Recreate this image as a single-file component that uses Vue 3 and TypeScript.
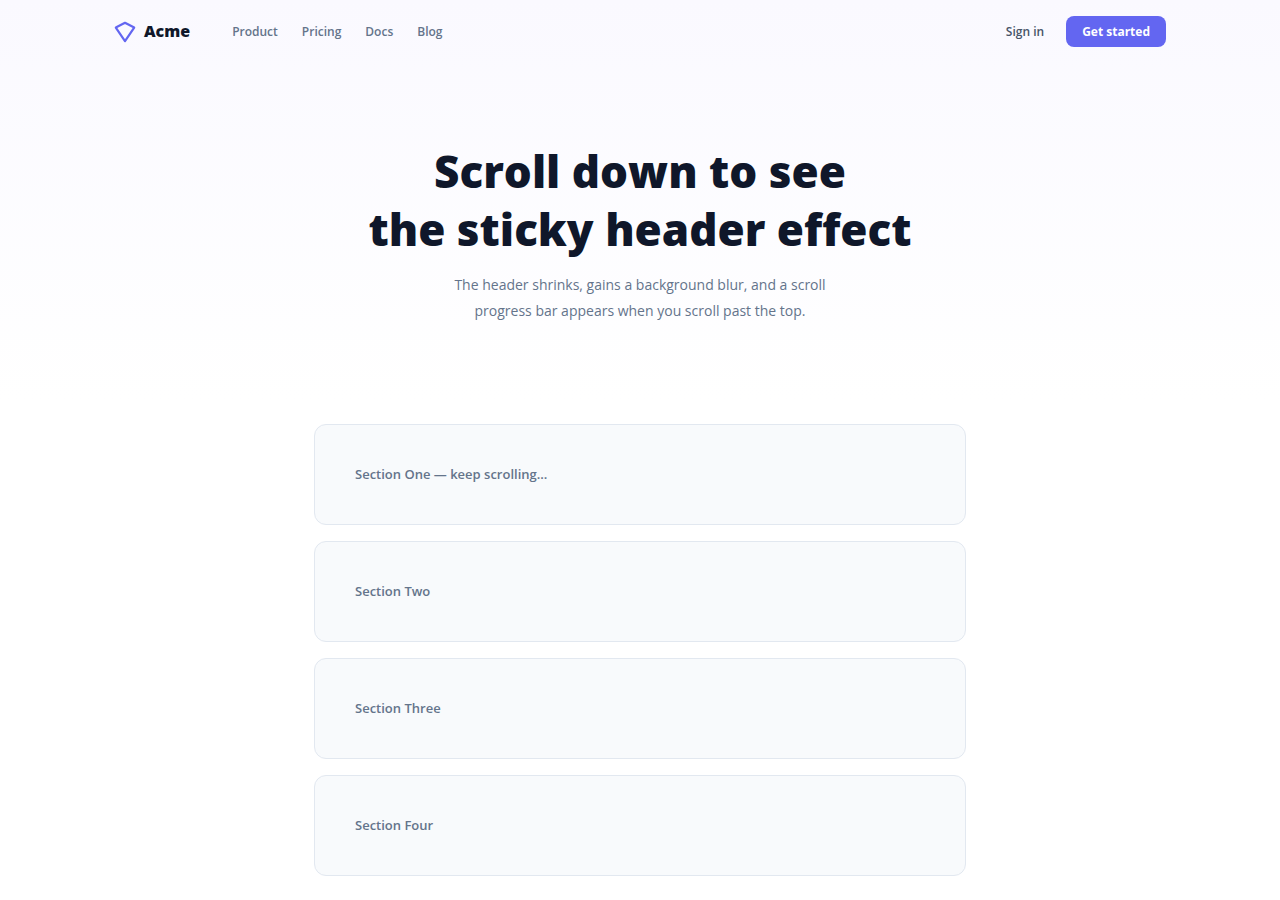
<script setup lang="ts">
import { computed, onMounted, onUnmounted, ref } from 'vue'

interface NavLink {
  label: string
  href: string
}

const links: NavLink[] = [
  { label: 'Product', href: '#product' },
  { label: 'Pricing', href: '#pricing' },
  { label: 'Docs', href: '#docs' },
  { label: 'Blog', href: '#blog' },
]

const sections: string[] = [
  'Section One — keep scrolling...',
  'Section Two',
  'Section Three',
  'Section Four',
]

const scrollTop = ref(0)
const progress = ref(0)
const scrolled = computed(() => scrollTop.value > 20)

function onScroll(): void {
  const root = document.documentElement
  const range = root.scrollHeight - root.clientHeight
  scrollTop.value = window.scrollY
  progress.value = range > 0 ? (window.scrollY / range) * 100 : 0
}

onMounted(() => window.addEventListener('scroll', onScroll, { passive: true }))
onUnmounted(() => window.removeEventListener('scroll', onScroll))
</script>

<template>
  <div class="page">
    <header class="header" :class="{ scrolled }">
      <div class="header-inner">
        <a class="brand" href="#top">
          <svg class="logo" viewBox="0 0 22 22" fill="none" aria-hidden="true">
            <path d="M11 1.8 L20.2 6.6 L11 20.2 L1.8 6.6 Z" stroke="#6366f1" stroke-width="2.2" stroke-linejoin="round" />
          </svg>
          <span>Acme</span>
        </a>
        <nav class="nav" aria-label="Main">
          <a v-for="link in links" :key="link.label" :href="link.href">{{ link.label }}</a>
        </nav>
        <div class="actions">
          <a class="signin" href="#signin">Sign in</a>
          <button class="cta" type="button">Get started</button>
        </div>
      </div>
      <div v-if="scrolled" class="progress" :style="{ width: progress + '%' }"></div>
    </header>

    <section id="top" class="hero">
      <h1>
        <span>Scroll down to see</span>
        <span>the sticky header effect</span>
      </h1>
      <p>The header shrinks, gains a background blur, and a scroll<br />progress bar appears when you scroll past the top.</p>
    </section>

    <main class="sections">
      <section v-for="title in sections" :key="title" class="card">{{ title }}</section>
    </main>
  </div>
</template>

<style>
body {
  background: #ffffff;
}
</style>

<style scoped>
.page {
  font-family: "Segoe UI", "Open Sans", "Noto Sans", sans-serif;
  color: #0f172a;
  background: linear-gradient(180deg, #faf9ff 0, #ffffff 400px);
}

.header {
  position: sticky;
  top: 0;
  z-index: 10;
}

.header.scrolled {
  background: rgba(255, 255, 255, 0.85);
  backdrop-filter: blur(12px);
}

.header-inner {
  display: flex;
  align-items: center;
  box-sizing: border-box;
  max-width: 1100px;
  min-height: 63px;
  margin: 0 auto;
  padding: 0 24px;
}

.scrolled .header-inner {
  min-height: 52px;
}

.progress {
  height: 2px;
  background: #6366f1;
}

.brand {
  display: flex;
  align-items: center;
  gap: 8px;
  margin-right: 42px;
  color: #0f172a;
  font-size: 16px;
  font-weight: 800;
  line-height: 25px;
  text-decoration: none;
}

.logo {
  width: 22px;
  height: 22px;
}

.nav {
  display: flex;
  flex: 1;
  gap: 24px;
}

.nav a,
.signin {
  color: #64748b;
  font-size: 12px;
  font-weight: 600;
  line-height: 19px;
  text-decoration: none;
}

.signin {
  color: #475569;
}

.actions {
  display: flex;
  align-items: center;
  gap: 22px;
}

.cta {
  padding: 6px 16px;
  border: 0;
  border-radius: 8px;
  background: #6366f1;
  color: #ffffff;
  font-family: inherit;
  font-size: 12px;
  font-weight: 700;
  line-height: 19px;
  cursor: pointer;
}

.hero {
  padding: 79px 24px 80px;
  text-align: center;
}

h1 {
  margin: 0 0 14px;
  font-size: 44px;
  font-weight: 800;
  line-height: 58px;
}

h1 span {
  display: block;
}

p {
  margin: 0;
  color: #64748b;
  font-size: 14px;
  line-height: 26px;
}

.sections {
  display: grid;
  gap: 16px;
  box-sizing: border-box;
  max-width: 700px;
  margin: 0 auto;
  padding: 20px 24px 80px;
}

.card {
  padding: 40px;
  border: 1px solid #e2e8f0;
  border-radius: 12px;
  background: #f8fafc;
  color: #64748b;
  font-size: 13px;
  font-weight: 600;
  line-height: 19px;
}
</style>
